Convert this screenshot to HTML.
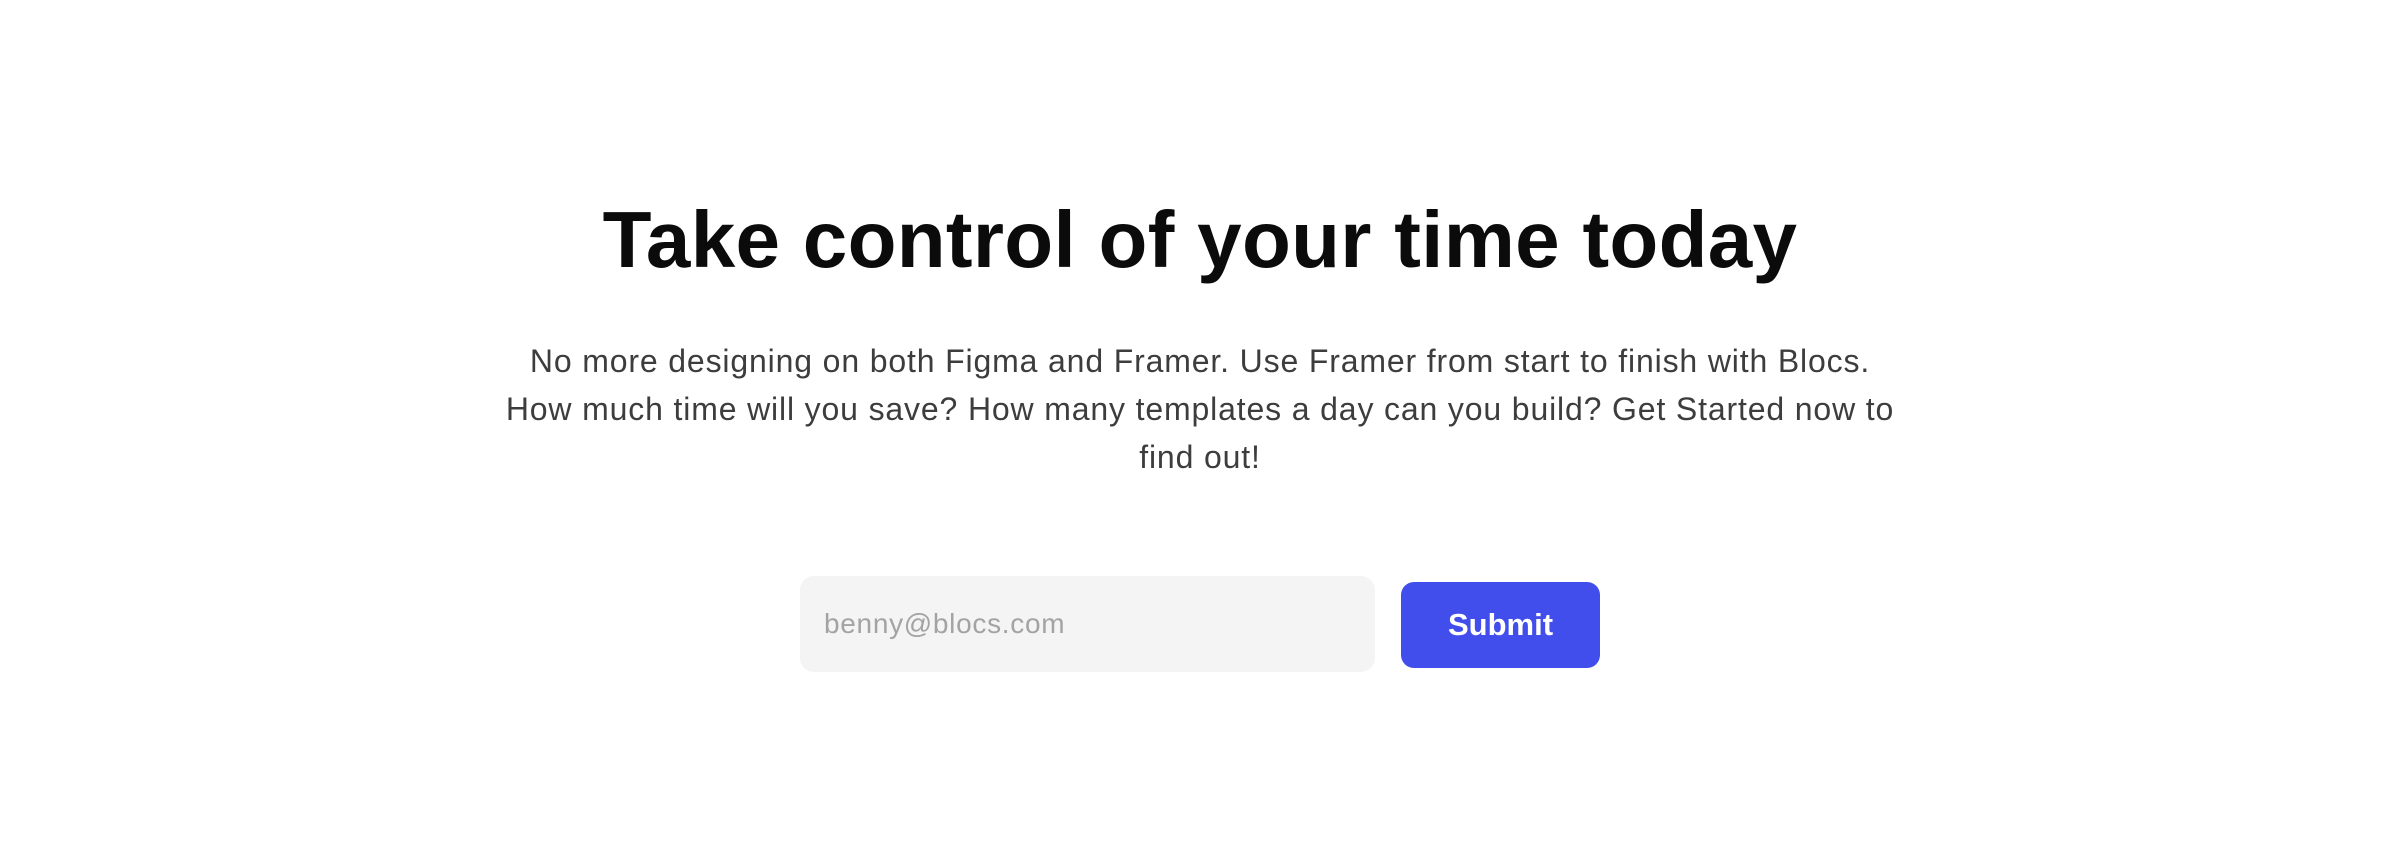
<!DOCTYPE html>
<html><head><meta charset="utf-8"><style>
html,body{margin:0;padding:0;width:2400px;height:864px;background:#fff;overflow:hidden;font-family:"Liberation Sans",sans-serif}
h1{position:absolute;left:0;width:2400px;top:190px;margin:0;text-align:center;font-size:80px;font-weight:700;color:#0b0b0b;line-height:100px;letter-spacing:0.3px}
p{position:absolute;left:300px;width:1800px;top:337px;margin:0;text-align:center;font-size:32px;line-height:48px;color:#3d3d3d;letter-spacing:0.85px}
.in{position:absolute;left:800px;top:576px;width:575px;height:96px;background:#f4f4f4;border-radius:14px;box-sizing:border-box;padding-left:24px;font-size:28px;line-height:96px;color:#a3a3a3;letter-spacing:0.7px}
.bt{position:absolute;left:1401px;top:582px;width:199px;height:86px;background:#414eeb;border-radius:13px;color:#fff;font-size:31px;font-weight:700;text-align:center;line-height:86px}
</style></head><body>
<h1>Take control of your time today</h1>
<p>No more designing on both Figma and Framer. Use Framer from start to finish with Blocs.<br>How much time will you save? How many templates a day can you build? Get Started now to<br>find out!</p>
<div class="in">benny@blocs.com</div>
<div class="bt">Submit</div>
</body></html>
